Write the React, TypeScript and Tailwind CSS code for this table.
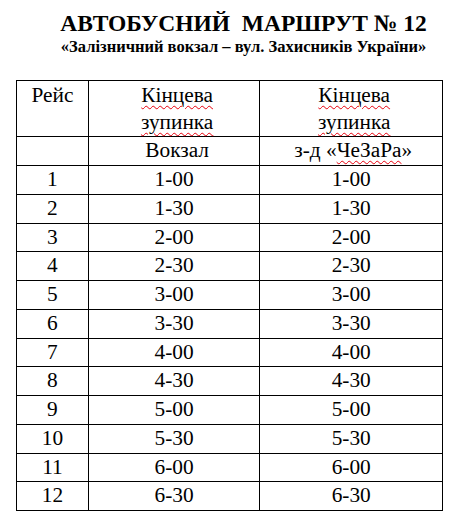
const rows = [
  ['1', '1-00'],
  ['2', '1-30'],
  ['3', '2-00'],
  ['4', '2-30'],
  ['5', '3-00'],
  ['6', '3-30'],
  ['7', '4-00'],
  ['8', '4-30'],
  ['9', '5-00'],
  ['10', '5-30'],
  ['11', '6-00'],
  ['12', '6-30'],
]

const cell = 'border border-black align-top'

function Spell({ children }: { children: React.ReactNode }) {
  return (
    <span className="underline decoration-wavy decoration-red-600 decoration-1 underline-offset-[3px]">
      {children}
    </span>
  )
}

export default function App() {
  return (
    <div className="w-[458px] h-[525px] overflow-hidden bg-white text-black [font-family:Tinos,'Liberation_Serif',FreeSerif,serif]">
      <div className="w-[487px] pt-[9px] text-center">
        <p className="text-[23.5px] leading-[28px] font-bold whitespace-pre">АВТОБУСНИЙ  МАРШРУТ № 12</p>
        <p className="text-[16.5px] leading-[19px] font-bold whitespace-nowrap">
          «Залізничний вокзал – вул. Захисників України»
        </p>
      </div>
      <table className="ml-[16px] mt-[24px] w-[427px] border-collapse text-[21.33px] leading-[26.7px] text-center">
        <colgroup>
          <col className="w-[72px]" />
          <col className="w-[172px]" />
          <col className="w-[183px]" />
        </colgroup>
        <tbody>
          <tr>
            <td className={`${cell} h-[56px] pt-[1px]`}>Рейс</td>
            <td className={`${cell} pt-[1px] pl-[6px]`}>
              <Spell>Кінцева</Spell>
              <br />
              <Spell>зупинка</Spell>
            </td>
            <td className={`${cell} pt-[1px] pl-[6px]`}>
              <Spell>Кінцева</Spell>
              <br />
              <Spell>зупинка</Spell>
            </td>
          </tr>
          <tr>
            <td className={`${cell} h-[29px]`}></td>
            <td className={`${cell} pl-[6px]`}>Вокзал</td>
            <td className={`${cell} pl-[4px]`}>
              з-д «<Spell>ЧеЗаРа</Spell>»
            </td>
          </tr>
          {rows.map(([n, t]) => (
            <tr key={n}>
              <td className={`${cell} h-[28.75px]`}>{n}</td>
              <td className={cell}>{t}</td>
              <td className={cell}>{t}</td>
            </tr>
          ))}
        </tbody>
      </table>
    </div>
  )
}
